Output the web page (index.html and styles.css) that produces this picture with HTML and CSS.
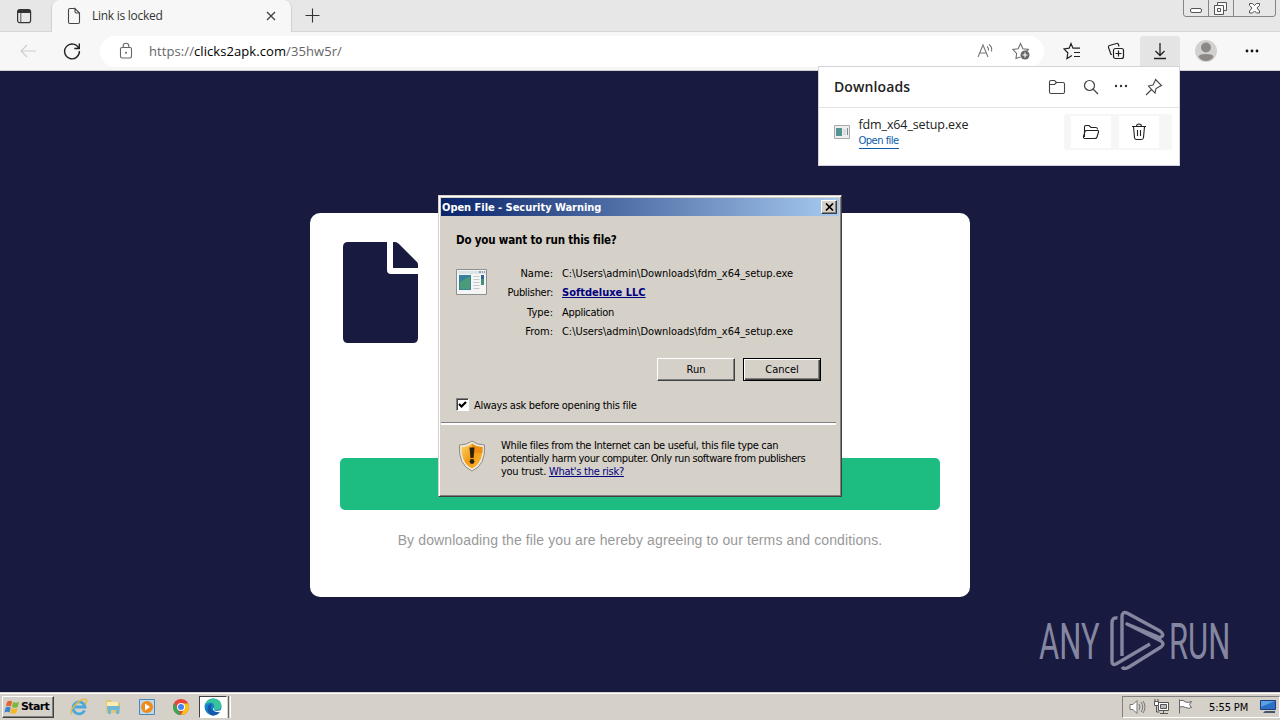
FILE: index.html
```html
<!DOCTYPE html>
<html lang="en">
<head>
<meta charset="utf-8">
<title>Link is locked</title>
<link rel="stylesheet" href="styles.css">
</head>
<body>
<header class="tabstrip">
  <div class="tab-actions"><svg width="16" height="16" viewBox="0 0 16 16"><rect x="1.600" y="1.600" width="13" height="13" rx="2.200" fill="none" stroke="#333" stroke-width="1.200"/><path d="M1.500 5V3.500q0-2 2-2h9q2 0 2 2V5z" fill="#333"/><path d="M4.800 5v9.500" stroke="#555"/></svg></div>
  <div class="tab">
    <svg width="14" height="18" viewBox="0 0 14 18" fill="none" stroke="#444" stroke-width="1.100"><path d="M8 1.500H3Q1.500 1.500 1.500 3v12Q1.500 16.500 3 16.500h8q1.500 0 1.500-1.500V6L8 1.500V4.500Q8 6 9.500 6h3"/></svg>
    <span class="tab-title">Link is locked</span>
    <svg class="tab-close" width="10" height="10" viewBox="0 0 10 10"><path d="M1 1l8 8M9 1l-8 8" stroke="#444" stroke-width="1.400"/></svg>
  </div>
  <svg class="tab-new" width="15" height="15" viewBox="0 0 15 15"><path d="M7.500 .5v14M.5 7.500h14" stroke="#333" stroke-width="1.100"/></svg>
  <div class="win-controls">
    <svg width="93" height="17" viewBox="0 0 93 17" fill="none" stroke="#858585"><path d="M.5 0v14q0 2.500 2.500 2.500h87q2.500 0 2.500-2.500V0M25.500 0v16M50.500 0v16"/><g stroke="#555"><rect x="7.500" y="8.500" width="11" height="4" rx="1.500" fill="#fafafa"/><path fill="#fafafa" d="M34.500 2.500h9v8h-9z"/><path fill="#fafafa" d="M31.500 5.500h9v9h-9z"/><path d="M34.500 8.500h3v3h-3z"/><path fill="#fafafa" d="M66.500 3.500h3l2 2 2-2h3v2l-2.500 2.500 2.500 3v2h-3l-2-2-2 2h-3v-2l2.500-3-2.500-2.500z"/></g></svg>
  </div>
</header>
<nav class="toolbar">
  <svg class="back" width="16" height="14" viewBox="0 0 16 14" fill="none" stroke="#cdcdcd" stroke-width="1.100"><path d="M16 7H1M7 1L1 7l6 6"/></svg>
  <svg class="reload" width="18" height="18" viewBox="0 0 18 18" fill="none" stroke="#222" stroke-width="1.400"><path d="M15.800 6.500A7.400 7.400 0 1 0 16.400 9M16.300 1.500v5h-5"/></svg>
  <div class="address">
    <svg class="lock" width="14" height="18" viewBox="0 0 14 18" fill="none" stroke="#666" stroke-width="1.100"><rect x="1.500" y="5.500" width="11" height="10.500" rx="1.500"/><path d="M4.200 5.500V4a2.800 2.800 0 0 1 5.600 0v1.500"/><circle cx="7" cy="10.800" r="1" fill="#666" stroke="none"/></svg>
    <span class="url">https://<b>clicks2apk.com</b>/35hw5r/</span>
    <svg class="aloud" width="17" height="16" viewBox="0 0 17 16" fill="none" stroke="#777" stroke-width="1.100"><path d="M1 14L6 2l5 12M2.800 10h6.500M10 3.500q2 1.500 1.500 4M12 1.500q3.500 2.500 2.500 7"/></svg>
    <svg class="fav" width="18" height="18" viewBox="0 0 18 18" fill="none" stroke="#6d6d6d" stroke-width="1.100"><path d="M8.500 15L4 16.500l.6-5L1 7.500l5.200-.8L8.500 1.500l2.400 5.200 5.500.8-2 2"/><circle cx="13" cy="13" r="4.500" fill="#666" stroke="none"/><path d="M13 10.500v5M10.500 13h5" stroke="#fff"/></svg>
  </div>
  <svg class="tool t1" width="18" height="18" viewBox="0 0 18 18" fill="none" stroke="#222" stroke-width="1.200"><path d="M9 13.500l-5 3 .8-5.700L1 7l5.200-.8L8 1.500l2 4.700h7M11 10.500h6M11 14.500h6"/></svg>
  <svg class="tool t2" width="18" height="18" viewBox="0 0 18 18" fill="none" stroke="#222" stroke-width="1.200"><path d="M5 12.500H4L1.500 5.500q-.5-1.500 1-2l7-2q1.500-.5 2 1l.5 2"/><rect x="6.500" y="6.500" width="10" height="10" rx="2"/><path d="M11.500 8.500v6M8.500 11.500h6"/></svg>
  <div class="download-btn"><svg width="14" height="18" viewBox="0 0 14 18" fill="none" stroke="#222" stroke-width="1.300"><path d="M7 1v12.500M2.500 9L7 13.500 11.500 9M1 16.500h12"/></svg></div>
  <svg class="avatar" width="22" height="22" viewBox="0 0 22 22"><circle cx="11" cy="11" r="11" fill="#d3d1cf"/><circle cx="11" cy="7.500" r="5" fill="#8b8886"/><path d="M3.500 17q0-3 7.500-3t7.500 3q-3 4-7.500 4t-7.500-4" fill="#8b8886"/></svg>
  <svg class="more" width="14" height="4" viewBox="0 0 14 4" fill="#111"><circle cx="2" cy="2" r="1.400"/><circle cx="7" cy="2" r="1.400"/><circle cx="12" cy="2" r="1.400"/></svg>
</nav>
<main class="page">
  <section class="card">
    <svg class="card-icon" width="75" height="101" viewBox="0 0 75 101" fill="#191a3f"><path d="M5 0h39v28q0 4 4 4h27v64q0 5-5 5H5q-5 0-5-5V5Q0 0 5 0z"/><path d="M50 0h2q2 0 4 2l18 18q1 1 1 3v3H50z"/></svg>
    <div class="card-button"></div>
    <p class="terms">By downloading the file you are hereby agreeing to our terms and conditions.</p>
  </section>
  <div class="watermark">
    <svg width="210" height="62" viewBox="0 0 210 62" fill="none" stroke="#8587a1" stroke-width="3.400" stroke-linejoin="round"><text class="wm-text" transform="translate(1 49) scale(.62 1)">ANY</text><path d="M79.500 8Q74 7 74 13v38q0 5 4 3l34-20M84 46V7q0-6 5-4l33 18q5 4 1 6-2 1-5-1L89 14l34 17q4 3 0 6L91 57q-5 3-7 0"/><text class="wm-text" transform="translate(131 49) scale(.62 1)">RUN</text></svg>
  </div>
</main>
<footer class="taskbar">
  <div class="start"><svg width="17" height="16" viewBox="0 0 17 16"><path d="M3 3q3-2 5-.5L7 7.500Q4.500 6 2 7.500z" fill="#e6622b"/><path d="M9 3q3 1.500 6-.3L13.800 8Q11 9.500 8 8z" fill="#79b83d"/><path d="M1.700 8.500q2.500-1.500 5 0L5.500 13.500Q3 12 .5 13.500z" fill="#3d82cf"/><path d="M7.600 9q3 1.500 6 0L12.300 14q-3 1.500-6 0z" fill="#f4b91f"/></svg><span>Start</span></div>
  <div class="quick">
    <svg width="18" height="18" viewBox="0 0 18 18"><path d="M14.500 12.500A6 6 0 1 1 15 9H5" fill="none" stroke="#49a9dc" stroke-width="2.800"/><path d="M2 16Q-1 14 5 7 12 0 16 1.500q2 1-1 5" fill="none" stroke="#e5b83c" stroke-width="1.300"/></svg>
    <svg width="18" height="18" viewBox="0 0 18 18"><path d="M2 2h5l1 2h8v11H2z" fill="#e3c574"/><path d="M3 4h11v5H3z" fill="#f9edb4"/><path d="M3 8h13l-1 8h-3v-4H7v4H4z" fill="#6fb7d6"/></svg>
    <svg width="18" height="18" viewBox="0 0 18 18"><path d="M1.500 1.500h15v15h-15z" fill="#b9d9ee" stroke="#4c88b7"/><circle cx="9" cy="9" r="6" fill="#f18a1c"/><path d="M7 5.500l5 3.500-5 3.500z" fill="#fff"/></svg>
    <svg width="18" height="18" viewBox="0 0 18 18"><circle cx="9" cy="9" r="8" fill="#e8453c"/><path d="M2.100 5L9 17A8 8 0 0 1 2.100 5" fill="#34a853"/><path d="M9 5.500h7.200A8 8 0 0 1 9 17l3-6z" fill="#fbc116"/><circle cx="9" cy="9" r="4" fill="#fff"/><circle cx="9" cy="9" r="3" fill="#4285f4"/></svg>
    <div class="active-app"><svg width="18" height="18" viewBox="0 0 18 18"><circle cx="9" cy="9" r="8.500" fill="#1583ce"/><path d="M1 7Q3 .5 9 .5q8 0 8.500 7Q17 12 12 12q-3 0-2-2Q11 5 6.500 4.500 3 4.500 1 7" fill="#38c49a"/><path d="M7 8q-1 6 9 6-3 4-8 3.400Q3 15 3.500 10 4 6 8 6" fill="#1459a6"/><path d="M10 10q-1 3 3 3 3 0 5-2v3q-8 1-9-3 0-1 1-1z" fill="#fff"/></svg></div>
    <i class="app-stub"></i>
  </div>
  <div class="tray">
    <svg width="17" height="16" viewBox="0 0 17 16" fill="none" stroke="#777"><path fill="#fff" d="M1 5.500h3l4-4v13l-4-4H1z"/><path d="M10 5q2 3 0 6M12 3q3.500 5 0 10M14 2q4 6 0 12"/></svg>
    <svg width="17" height="17" viewBox="0 0 17 17" fill="none" stroke="#555"><path fill="#fff" d="M5.500 4.500h10v8h-10z"/><path fill="#bbb" d="M7.500 6.500h6v4h-6z"/><path d="M7 15.500h8M10.500 13v2M3.500 8v6h3M2 1v3M5 1v3"/><path fill="#fff" d="M1.500 3.500h4v4h-4z"/></svg>
    <svg width="17" height="17" viewBox="0 0 17 17" fill="#fff" stroke="#666"><path d="M2.500 1.500v14M2.500 2.500q4-1 6 1.500 3 1 6-.5l-2 3 2 3q-3 1.500-6 0-2-1.500-6-.5z"/></svg>
    <span class="clock">5:55 PM</span>
    <svg class="monitor" width="16" height="15" viewBox="0 0 16 15"><path d="M.5 1.500h15v9H.5z" fill="#2b70c4" stroke="#1d3f80"/><path d="M1 2h14L1 8z" fill="#5ba0e4"/><path d="M5 12h10v2H3z" fill="#46546b"/></svg>
  </div>
</footer>

<aside class="downloads">
  <div class="dl-head"><h2>Downloads</h2>
    <svg width="18" height="16" viewBox="0 0 18 16" fill="none" stroke="#444" stroke-width="1.100"><path d="M1.500 3q0-1.500 1.500-1.500h3.500l2 2H15q1.500 0 1.500 1.500v8q0 1.500-1.500 1.500H3Q1.500 14.500 1.500 13zM1.500 5.500h5l2-2"/></svg>
    <svg width="16" height="16" viewBox="0 0 16 16" fill="none" stroke="#444" stroke-width="1.200"><circle cx="6.500" cy="6.500" r="5"/><path d="M10 10l5 5"/></svg>
    <svg width="14" height="16" viewBox="0 0 14 16" fill="#333"><circle cx="2" cy="7" r="1.200"/><circle cx="7" cy="7" r="1.200"/><circle cx="12" cy="7" r="1.200"/></svg>
    <svg width="18" height="18" viewBox="0 0 18 18" fill="none" stroke="#444" stroke-width="1.100"><path d="M10.500 1.500l6 6-2 1-3.500 2-1 4.500L3.500 8 8 7l2-4zM6.500 11.500L1 17"/></svg>
  </div>
  <div class="dl-item">
    <svg width="16" height="14" viewBox="0 0 16 14"><path d="M.5.500h15v13H.5z" fill="#eee" stroke="#aaa"/><path d="M2 3h6v8H2z" fill="#539590"/><path d="M9 4h3v6H9z" fill="#ddd"/><path d="M13 3h1v7h-1z" fill="#789"/></svg>
    <div class="dl-text"><span class="dl-name">fdm_x64_setup.exe</span><span class="dl-open">Open file</span></div>
    <div class="dl-actions">
      <div class="dl-act"><svg width="18" height="16" viewBox="0 0 18 16" fill="none" stroke="#222" stroke-width="1.100"><path d="M2.500 13V3Q2.500 1.500 4 1.500h3l2 2h5q1.500 0 1.500 2M4.500 6.500h11q1.500 0 1 1.500l-1.500 5q-.4 1.500-2 1.500H3q-2 0-1.500-2l1.500-5q.4-1 1.500-1z"/></svg></div>
      <div class="dl-act"><svg width="16" height="18" viewBox="0 0 16 18" fill="none" stroke="#222" stroke-width="1.100"><path d="M1 3.500h14M5.500 3.500q0-2.500 2.500-2.500t2.500 2.500M2.500 3.500l1 11q.2 2 2 2h5q1.800 0 2-2l1-11M6.500 7v6M9.500 7v6"/></svg></div>
    </div>
  </div>
</aside>

<div class="dialog">
  <div class="dlg-title"><span>Open File - Security Warning</span><div class="dlg-close"><svg width="9" height="8" viewBox="0 0 9 8"><path d="M1 .5l7 7M8 .5l-7 7" stroke="#000" stroke-width="1.700"/></svg></div></div>
  <div class="dlg-main">
    <h3>Do you want to run this file?</h3>
    <div class="info">
      <svg class="app-icon" width="32" height="27" viewBox="0 0 32 27"><path d="M.5 .5h30v25h-30z" fill="#f5f5f3" stroke="#8c9090"/><path d="M2 2h28v3H2z" fill="#dce4e8"/><path d="M23 3h2M26 3h1M28 3h1" stroke="#456"/><path d="M3 6h12v15H3z" fill="#357fa0"/><path d="M4 13l10-6v13H4z" fill="#4b9a78"/><path d="M17.500 7.500h6M17.500 10.500h6M17.500 13.500h6M17.500 16.500h6M17.500 19.500h6" stroke="#c5c8c8"/><path d="M25 6h3v10h-3z" fill="#31659a"/><path d="M25 10h3v6h-3z" fill="#418c7c"/></svg>
      <dl>
        <dt>Name:</dt><dd class="path">C:\Users\admin\Downloads\fdm_x64_setup.exe</dd>
        <dt class="tight">Publisher:</dt><dd class="publisher">Softdeluxe LLC</dd>
        <dt>Type:</dt><dd class="type">Application</dd>
        <dt>From:</dt><dd class="path">C:\Users\admin\Downloads\fdm_x64_setup.exe</dd>
      </dl>
    </div>
    <div class="buttons"><div class="btn">Run</div><div class="btn default">Cancel</div></div>
    <div class="ask"><span class="check"><svg width="9" height="9" viewBox="0 0 9 9"><path d="M1 4l2.500 2.500L8 2" fill="none" stroke="#000" stroke-width="2.200"/></svg></span><span class="ask-label">Always ask before opening this file</span></div>
  </div>
  <div class="dlg-foot">
    <svg width="28" height="32" viewBox="0 0 28 32"><defs><linearGradient id="sh" x1="0" x2="1" y2="1"><stop stop-color="#fbd66b"/><stop offset=".5" stop-color="#f39a14"/><stop offset="1" stop-color="#f7bd3a"/></linearGradient></defs><path d="M14 1q5 4 12.500 4Q28 25 14 31 0 25 1.500 5 9 5 14 1z" fill="#eeeadf" stroke="#8b8c86"/><path d="M14 3.500q4.500 3.500 10.500 3.500Q25 23 14 28.500 3 23 3.500 7 9.500 7 14 3.500z" fill="url(#sh)"/><path d="M14 3.500q4.500 3.500 10.500 3.500l-.2 6H14z" fill="#ef8d10"/><path d="M11.500 7.500h5l-1 10.500h-3z" fill="#2c2010"/><circle cx="14" cy="21.500" r="2.400" fill="#2c2010"/></svg>
    <p><span class="l1">While files from the Internet can be useful, this file type can</span><span class="l2">potentially harm your computer. Only run software from publishers</span><span class="l3">you trust. <u>What's the risk?</u></span></p>
  </div>
</div>
</body>
</html>
```
FILE: styles.css
```css
* { box-sizing: border-box; }
body { margin: 0; width: 1280px; height: 720px; overflow: hidden; position: relative; display: flex; flex-direction: column; font-family: "DejaVu Sans Condensed", "DejaVu Sans", sans-serif; font-stretch: condensed; font-size: 11px; color: #000; white-space: nowrap; }
svg { display: block; flex: none; }
h2, h3, p, dl, dd { margin: 0; }

.tabstrip { height: 32px; flex: none; display: flex; background: #e7e7e7; border-bottom: 1px solid #d6d6d6; }
.tab-actions { width: 51px; padding: 8px 0 0 16px; }
.tab { width: 241px; height: 32px; background: #f7f7f7; border: 1px solid #d2d2d2; border-top: 0; border-bottom: 0; border-radius: 8px 8px 0 0; display: flex; align-items: center; padding: 0 15px; }
.tab-title { font: 12px/16px "Open Sans", sans-serif; margin: 0 0 0 11px; color: #333; letter-spacing: -.27px; }
.tab-close { margin-left: auto; }
.tab-new { margin: 8px 0 0 13px; }
.win-controls { margin: 0 4px 0 auto; }

.toolbar { height: 39px; flex: none; display: flex; align-items: center; background: #f7f7f7; border-bottom: 1px solid #cfcfcf; }
.back { margin-left: 20px; }
.reload { margin-left: 27px; }
.address { width: 944px; height: 31px; margin-left: 19px; background: #fff; border-radius: 16px; display: flex; align-items: center; padding: 0 14px 0 19px; }
.url { font: 13px "Open Sans", sans-serif; color: #666; margin-left: 16px; letter-spacing: .08px; }
.url b { font-weight: 400; color: #000; }
.aloud { margin-left: auto; }
.fav { margin-left: 18px; }
.t1 { margin-left: 19px; }
.t2 { margin-left: 26px; }
.download-btn { width: 40px; height: 31px; margin-left: 15px; border-radius: 3px; background: #e4e4e4; display: flex; align-items: center; justify-content: center; }
.avatar { margin-left: 15px; }
.more { margin-left: 28px; }

.page { flex: 1; background: #191a3f; display: flex; justify-content: center; padding-top: 142px; }
.card { width: 660px; height: 384px; background: #fff; border-radius: 10px; padding: 29px 30px 0; }
.card-icon { margin-left: 3px; }
.card-button { margin-top: 115px; height: 52px; border-radius: 5px; background: #1dbc81; }
.terms { margin-top: 22px; text-align: center; font: 14px/17px "Liberation Sans", sans-serif; color: #999; letter-spacing: .11px; }
.watermark { position: absolute; left: 1038px; top: 610px; }
.wm-text { font: 400 50px Roboto, sans-serif; fill: #8587a1; stroke: none; }

.taskbar { height: 28px; flex: none; background: #d5d0c8; border-top: 1px solid #d5d0c8; box-shadow: inset 0 1px #fff; display: flex; align-items: center; padding: 0 0 0 2px; }
.start { width: 52px; height: 22px; border: 1px solid; border-color: #fff #404040 #404040 #fff; box-shadow: inset -1px -1px #808080; display: flex; align-items: center; padding-left: 1px; font: bold 11px "DejaVu Sans", sans-serif; }
.start span { letter-spacing: -.65px; }
.quick { display: flex; align-items: center; gap: 16px; margin-left: 16px; }
.active-app { width: 28px; height: 22px; margin-left: -7px; border: 1px solid; border-color: #404040 #fff #fff #404040; background: #fff; display: flex; align-items: center; justify-content: center; }
.app-stub { width: 3px; height: 22px; margin-left: -15px; border-left: 1px solid #666; border-right: 1px solid #fff; }
.tray { width: 158px; height: 22px; margin: 0 0 0 auto; border: 1px solid; border-color: #808080 #fff #fff #808080; display: flex; align-items: center; padding-left: 6px; gap: 7px; }
.clock { margin-left: 8px; margin-top: 1px; letter-spacing: -.1px; }
.monitor { margin-left: 5px; }

.downloads { position: absolute; left: 818px; top: 66px; width: 362px; height: 100px; background: #fff; border: 1px solid #d3d3dc; }
.dl-head { height: 41px; border-bottom: 1px solid #e4e4e4; display: flex; align-items: center; padding: 0 16px 0 15px; }
.dl-head h2 { font: 600 14px/18px "Open Sans", sans-serif; color: #222; margin: 0 auto 0 0; letter-spacing: .1px; }
.dl-head svg + svg { margin-left: 15px; }
.dl-head h2 + svg { margin-right: 2px; }
.dl-head svg:last-child { margin-left: 17px; }
.dl-item { height: 48px; display: flex; align-items: center; padding-left: 15px; }
.dl-text { margin: 0 0 0 8.500px; display: flex; flex-direction: column; align-items: flex-start; }
.dl-name { font: 12.500px/17px "Open Sans", sans-serif; color: #222; letter-spacing: -.12px; }
.dl-open { font: 10px/15px "DejaVu Sans", sans-serif; letter-spacing: -.55px; color: #0c5ca8; border-bottom: 1px solid #0c5ca8; }
.dl-actions { margin-left: auto; margin-right: 7px; width: 108px; height: 36px; border-radius: 3px; background: #f6f6f6; display: flex; align-items: center; gap: 8px; padding-left: 7px; }
.dl-act { width: 40px; height: 32px; background: #fff; display: flex; align-items: center; justify-content: center; }

.dialog { position: absolute; left: 438px; top: 195px; width: 404px; height: 302px; background: #d5d0c8; border: 1px solid; border-color: #d5d0c8 #404040 #404040 #d5d0c8; box-shadow: inset 1px 1px #fff, inset -1px -1px #808080; padding: 2px; }
.dlg-title { height: 18px; background: linear-gradient(90deg, #0a246a, #a6caf0); color: #fff; font-weight: bold; font-size: 11px; letter-spacing: -.03px; display: flex; align-items: center; justify-content: space-between; padding: 0 2px 0 1px; }
.dlg-close { width: 16px; height: 14px; background: #d5d0c8; border: 1px solid; border-color: #fff #404040 #404040 #fff; box-shadow: inset -1px -1px #808080; display: flex; align-items: center; justify-content: center; }
.dlg-main { height: 206px; padding: 17px 18px 0 15px; }
.dlg-main h3 { font-size: 11.500px; line-height: 14px; letter-spacing: -.18px; }
.info { display: flex; margin-top: 17px; }
.app-icon { margin-top: 5px; }
dl { width: 320px; display: grid; grid-template-columns: 65px 1fr; column-gap: 9px; grid-auto-rows: 19.400px; line-height: 19px; }
dt { text-align: right; }
.tight { letter-spacing: -.3px; }
.path { letter-spacing: -.04px; }
.type { letter-spacing: -.3px; }
.publisher { font-weight: bold; color: #000080; text-decoration: underline; }
.buttons { display: flex; justify-content: flex-end; gap: 8px; margin-top: 16px; }
.btn { width: 78px; height: 23px; border: 1px solid; border-color: #fff #404040 #404040 #fff; box-shadow: inset -1px -1px #808080; text-align: center; line-height: 21px; }
.btn.default { border-color: #000; box-shadow: inset 1px 1px #fff, inset -1px -1px #404040, inset -2px -2px #808080; }
.ask { display: flex; align-items: center; margin-top: 17px; }
.check { width: 13px; height: 13px; background: #fff; border: 1px solid; border-color: #808080 #fff #fff #808080; box-shadow: inset 1px 1px #404040; padding: 1px; }
.ask-label { margin: 1px 0 -1px 5px; letter-spacing: -.28px; }
.dlg-foot { display: flex; padding: 15px 0 0 17px; position: relative; }
.dlg-foot::before { content: ""; position: absolute; left: 0; top: 0; width: 395px; height: 2px; background: #fff; border-top: 1px solid #808080; }
.dlg-foot svg { margin-top: 3px; }
.dlg-foot p { margin: 2px 0 0 15px; line-height: 13px; }
.dlg-foot p span { display: block; }
.l1 { letter-spacing: -.32px; }
.l2 { letter-spacing: -.42px; }
.l3 { letter-spacing: -.27px; }
.dlg-foot u { color: #000080; }
```
